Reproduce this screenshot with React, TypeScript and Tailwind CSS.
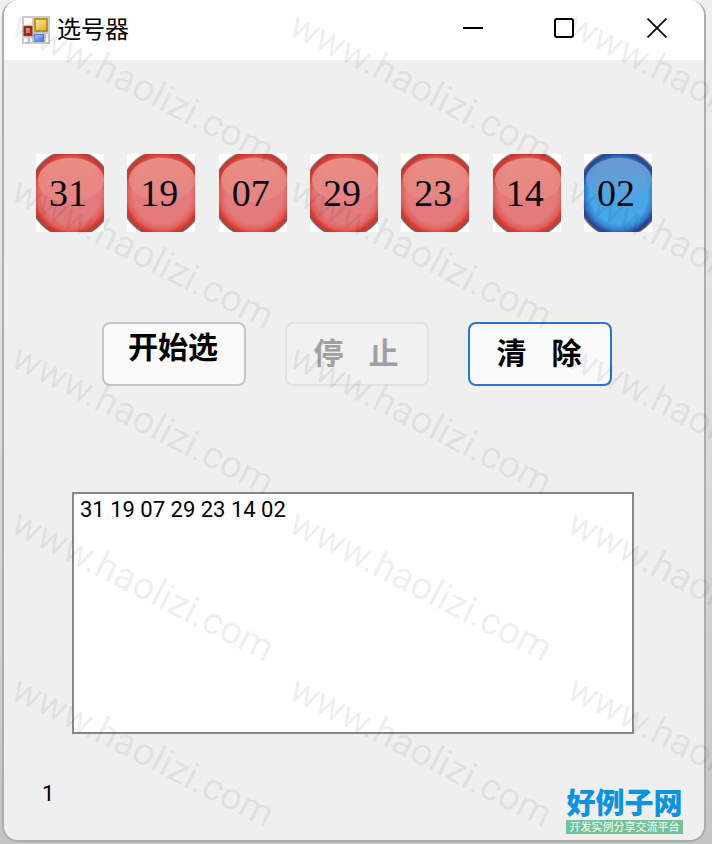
import React from 'react';

const RED_NUMBERS = ['31', '19', '07', '29', '23', '14'];
const BLUE_NUMBER = '02';
const WATERMARKS = Array.from({ length: 15 }, (_, i) => i);

interface BallProps {
  value: string;
  color: 'red' | 'blue';
}

function Ball({ value, color }: BallProps) {
  return (
    <div className="grid h-[78px] w-[68px] place-items-center">
      <svg viewBox="0 0 68 78" className="col-start-1 row-start-1 h-[78px] w-[68px]" aria-hidden="true">
        <rect width="68" height="78" fill="#fff" />
        <ellipse cx="35" cy="39" rx="43" ry="45" fill={`url(#${color}-ball)`} />
        <ellipse cx="35" cy="26" rx="33" ry="22" fill={`url(#${color}-shine)`} />
      </svg>
      <span className="col-start-1 row-start-1 pr-1 font-['Liberation_Serif',serif] text-[38px] leading-[38px] text-[#0a0a14]">
        {value}
      </span>
    </div>
  );
}

function BallGradients() {
  return (
    <svg className="absolute h-0 w-0" aria-hidden="true">
      <defs>
        <radialGradient id="red-ball" cx="0.5" cy="0.51" r="0.5">
          <stop offset="0" stopColor="#e27c80" />
          <stop offset="0.66" stopColor="#e37a7c" />
          <stop offset="0.8" stopColor="#e0605a" />
          <stop offset="0.88" stopColor="#d8392f" />
          <stop offset="0.93" stopColor="#c23a34" />
          <stop offset="0.96" stopColor="#7a5c5a" />
          <stop offset="1" stopColor="#fff" />
        </radialGradient>
        <linearGradient id="red-shine" x1="0" y1="0" x2="0" y2="1">
          <stop offset="0" stopColor="#e98f84" />
          <stop offset="1" stopColor="#e88a84" stopOpacity="0.6" />
        </linearGradient>
        <radialGradient id="blue-ball" cx="0.5" cy="0.51" r="0.5">
          <stop offset="0" stopColor="#44a6e6" />
          <stop offset="0.66" stopColor="#46a8e8" />
          <stop offset="0.8" stopColor="#3480cc" />
          <stop offset="0.88" stopColor="#294e9e" />
          <stop offset="0.93" stopColor="#2b468c" />
          <stop offset="0.96" stopColor="#5c6478" />
          <stop offset="1" stopColor="#fff" />
        </radialGradient>
        <linearGradient id="blue-shine" x1="0" y1="0" x2="0" y2="1">
          <stop offset="0" stopColor="#6f98d2" />
          <stop offset="1" stopColor="#58a4de" stopOpacity="0.6" />
        </linearGradient>
      </defs>
    </svg>
  );
}

function AppIcon() {
  return (
    <svg viewBox="0 0 28 28" className="h-7 w-7" aria-hidden="true">
      <defs>
        <linearGradient id="icon-gold" x1="0" y1="0" x2="1" y2="1">
          <stop offset="0" stopColor="#fbe48c" />
          <stop offset="1" stopColor="#e4b83c" />
        </linearGradient>
        <linearGradient id="icon-blue" x1="0" y1="0" x2="1" y2="1">
          <stop offset="0" stopColor="#a8c4f8" />
          <stop offset="1" stopColor="#4874dc" />
        </linearGradient>
      </defs>
      <rect width="28" height="28" fill="#cacaca" />
      <path d="M2 2h8v7H2zM2 22h4v4H2zM8 22h2v4H8zM24 18h2v8h-2z" fill="#fff" />
      <rect x="1.500" y="10" width="9" height="10" fill="#9c2c20" />
      <rect x="4" y="12" width="4" height="5" fill="#dc8070" />
      <rect x="12" y="2" width="14" height="14" fill="#b8942c" />
      <rect x="14" y="4" width="10" height="10" fill="url(#icon-gold)" />
      <rect x="12" y="18" width="10" height="8" fill="#5c80d4" />
      <rect x="13" y="19" width="8" height="6" fill="url(#icon-blue)" />
    </svg>
  );
}

function TitleBar() {
  return (
    <header className="flex h-15 items-center bg-white pr-px pl-[18px]">
      <AppIcon />
      <h1 className="ml-[7px] grow text-2xl leading-8">选号器</h1>
      <button type="button" aria-label="最小化" className="flex h-14 w-23 items-center justify-center pb-1">
        <svg viewBox="0 0 20 20" className="h-5 w-5">
          <path d="M0 10h20" stroke="#000" strokeWidth="2" />
        </svg>
      </button>
      <button type="button" aria-label="最大化" className="flex h-14 w-23 items-center justify-center pr-0.5 pb-1">
        <svg viewBox="0 0 20 20" className="h-5 w-5">
          <rect x="1" y="1" width="18" height="18" rx="2" fill="none" stroke="#000" strokeWidth="2" />
        </svg>
      </button>
      <button type="button" aria-label="关闭" className="flex h-14 w-23 items-center justify-center pb-1">
        <svg viewBox="0 0 20 20" className="h-5 w-5">
          <path d="M0.500 0.500l19 19M19.500 0.500l-19 19" stroke="#111" strokeWidth="1.900" />
        </svg>
      </button>
    </header>
  );
}

function Watermark() {
  return (
    <div
      aria-hidden="true"
      className="pointer-events-none absolute inset-0 grid auto-rows-[166px] grid-cols-[278px_278px_278px] overflow-hidden pt-1 pl-6"
    >
      {WATERMARKS.map((i) => (
        <span
          key={i}
          className="origin-top-left rotate-[27deg] font-[Roboto,sans-serif] text-[38px] leading-10 whitespace-nowrap text-black/8"
        >
          www.haolizi.com
        </span>
      ))}
    </div>
  );
}

export default function App() {
  return (
    <div className="relative min-h-screen overflow-hidden bg-linear-to-b from-[#f0f0f0] via-[#dcdcdc] to-[#c4c4c4] pr-[6px] pb-0.5 pl-0.5 font-['Liberation_Sans','Noto_Sans_CJK_SC',sans-serif] text-black">
      <BallGradients />
      <div className="flex min-h-[calc(100vh-2px)] flex-col overflow-hidden rounded-2xl border-2 border-t-0 border-[#adadad] bg-[#efefef]">
        <TitleBar />

        <main className="flex grow flex-col">
          <div className="mt-[94px] mr-13 ml-8 flex justify-between">
            {RED_NUMBERS.map((n) => (
              <Ball key={n} value={n} color="red" />
            ))}
            <Ball value={BLUE_NUMBER} color="blue" />
          </div>

          <div className="mt-[90px] mr-23 ml-[98px] flex justify-between text-[30px] leading-9 font-bold">
            <button
              type="button"
              className="h-16 w-36 rounded-lg border-2 border-[#c6c6c6] bg-[#fafafa] pr-0.5 pb-3"
            >
              开始选
            </button>
            <button
              type="button"
              disabled
              className="h-16 w-36 rounded-lg border-2 border-[#e2e2e2] bg-[#f1f1f1] pr-0.5 whitespace-pre text-[#a0a0a0]"
            >
              {'停   止'}
            </button>
            <button
              type="button"
              className="h-16 w-36 rounded-lg border-2 border-[#2f74cc] bg-[#fafafa] pr-0.5 whitespace-pre"
            >
              {'清   除'}
            </button>
          </div>

          <textarea
            readOnly
            aria-label="选号记录"
            defaultValue="31 19 07 29 23 14 02"
            className="mt-[106px] mr-[70px] ml-17 h-[242px] resize-none border-2 border-[#828790] bg-white px-1.5 font-[Roboto,sans-serif] text-[22px] leading-8 outline-none"
          />

          <footer className="mt-auto flex items-end justify-between pr-[21px] pb-1.5 pl-[38px]">
            <output className="mb-6 font-[Roboto,sans-serif] text-[22px] leading-8">1</output>
            <a href="#" className="block w-[117px] text-center">
              <span className="block text-[29px] leading-8 font-black text-[#0b92e0]">好例子网</span>
              <span className="block bg-[#72c496] text-[11px] leading-[14px] whitespace-nowrap text-white">
                开发实例分享交流平台
              </span>
            </a>
          </footer>
        </main>
      </div>
      <Watermark />
    </div>
  );
}
